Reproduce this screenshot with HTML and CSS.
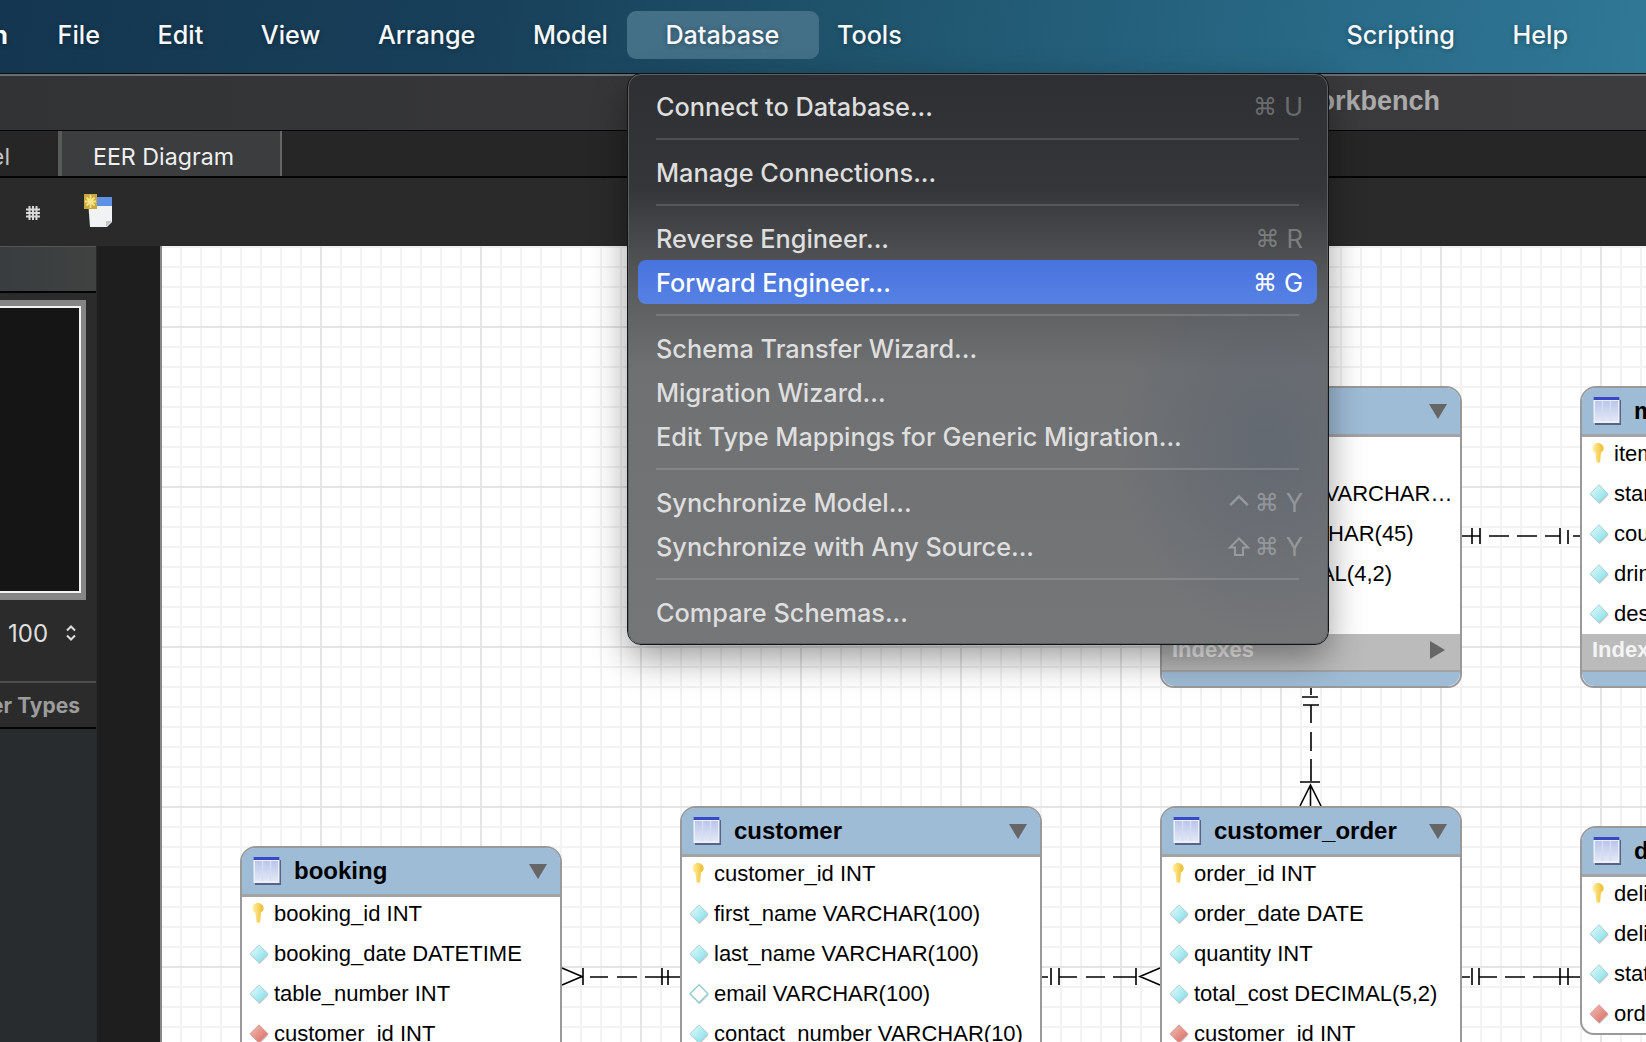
FILE: index.html
```html
<!DOCTYPE html>
<html lang="en">
<head>
  <meta charset="UTF-8">
  <title>MySQL Workbench</title>
  <link rel="stylesheet" href="styles.css">
</head>
<body>
  <!-- shared icons -->
  <svg class="sprite" width="0" height="0">
    <defs>
      <linearGradient id="gradCyan" x1="0" y1="0" x2="1" y2="1">
        <stop offset="0" stop-color="#eafdfd"/>
        <stop offset="1" stop-color="#79dbe6"/>
      </linearGradient>
      <linearGradient id="gradRed" x1="0" y1="0" x2="1" y2="1">
        <stop offset="0" stop-color="#f3c1ba"/>
        <stop offset="1" stop-color="#d8665c"/>
      </linearGradient>
      <linearGradient id="gradKey" x1="0" y1="0" x2="1" y2="0">
        <stop offset="0" stop-color="#fff3a8"/>
        <stop offset="1" stop-color="#eeb928"/>
      </linearGradient>
      <linearGradient id="gradCols" x1="0" y1="0" x2="0" y2="1">
        <stop offset="0" stop-color="#b9c6ea"/>
        <stop offset="1" stop-color="#e3e8f7"/>
      </linearGradient>
      <symbol id="icon-table" viewBox="0 0 28 28">
        <rect x="2" y="3" width="26" height="25" fill="#56648a"/>
        <rect x="0.5" y="0" width="26" height="26" fill="#eef0f8"/>
        <rect x="0.5" y="0" width="26" height="3" fill="#3a48c8"/>
        <rect x="2" y="4" width="23" height="20" fill="url(#gradCols)"/>
        <path d="M9.5 4v20M17.5 4v20" stroke="#d5dcf2" stroke-width="1.5"/>
      </symbol>
      <symbol id="icon-key" viewBox="0 0 14 20">
        <path d="M7 0c3.2 0 5.6 2.3 5.6 5.2 0 2-1 3.500-2.600 4.300l-.8 8.500c-.1 1-.7 1.700-1.600 1.700H6.500c-.6 0-1-.4-1.100-1.100L4.300 9.700C2.500 8.900 1.400 7.300 1.400 5.200 1.400 2.300 3.800 0 7 0z" fill="url(#gradKey)"/>
      </symbol>
      <symbol id="icon-col" viewBox="0 0 20 20">
        <path d="M10 1l9 9-9 9-9-9z" fill="#777" opacity=".35" transform="translate(0.6 1.2)"/>
        <path d="M10 .8l9 9-9 9-9-9z" fill="url(#gradCyan)" stroke="#a9cfd4"/>
      </symbol>
      <symbol id="icon-null" viewBox="0 0 20 20">
        <path d="M10 1l9 9-9 9-9-9z" fill="#777" opacity=".35" transform="translate(0.6 1.2)"/>
        <path d="M10 .8l9 9-9 9-9-9z" fill="#fff" stroke="#8fc9cf" stroke-width="1.300"/>
      </symbol>
      <symbol id="icon-fk" viewBox="0 0 20 20">
        <path d="M10 1l9 9-9 9-9-9z" fill="#777" opacity=".35" transform="translate(0.6 1.2)"/>
        <path d="M10 .8l9 9-9 9-9-9z" fill="url(#gradRed)" stroke="#cfa09a"/>
      </symbol>
      <symbol id="icon-ctrl" viewBox="0 0 20 20">
        <path d="M2 12l8-8 8 8" fill="none" stroke="currentColor" stroke-width="2.200"/>
      </symbol>
      <symbol id="icon-shift" viewBox="0 0 22 22">
        <path d="M11 2.500L20 11.500h-5v7.500H7v-7.500H2z" fill="none" stroke="currentColor" stroke-width="2"/>
      </symbol>
    </defs>
  </svg>

  <div class="app">
    <nav class="menubar">
      <span class="menubar-app"><b>MySQLWorkbench</b></span>
      <span class="menubar-item">File</span>
      <span class="menubar-item">Edit</span>
      <span class="menubar-item">View</span>
      <span class="menubar-item">Arrange</span>
      <span class="menubar-item">Model</span>
      <span class="menubar-item menubar-open">Database</span>
      <span class="menubar-item">Tools</span>
      <span class="menubar-item menubar-push">Scripting</span>
      <span class="menubar-item">Help</span>
    </nav>

    <div class="titlebar">MySQL Workbench</div>

    <div class="tabbar">
      <div class="tab tab-cut">Model</div>
      <div class="tab tab-active">EER Diagram</div>
    </div>

    <div class="toolbar">
      <svg class="tool-grid" width="16" height="16" viewBox="0 0 16 16">
        <path d="M4.500 1v14M8 1v14M11.500 1v14M1 4.500h14M1 8h14M1 11.500h14" stroke="#d8d8d8" stroke-width="2"/>
      </svg>
      <svg class="tool-note" width="32" height="34" viewBox="0 0 32 34">
        <path d="M5 6h24v22l-5 5H7z" fill="#f1f2f4"/>
        <path d="M29 27l-6 0 0 6z" fill="#c4c4c4"/>
        <rect x="5" y="3" width="24" height="9" fill="#5f91e4"/>
        <rect x="1" y="0" width="13" height="15" fill="#c9a93c"/>
        <path d="M7.500 1v13M2 7.500h11M3.500 3.500l8 8M11.500 3.500l-8 8" stroke="#f6e68a" stroke-width="1.800"/>
      </svg>
    </div>

    <div class="workspace">
      <aside class="sidepanel">
        <div class="side-head"></div>
        <div class="thumb"><div class="thumb-view"></div></div>
        <div class="zoom-row">
          <span>100</span>
          <svg width="12" height="18" viewBox="0 0 12 18">
            <path d="M2 6.500l4-4 4 4M2 11.500l4 4 4-4" fill="none" stroke="#dcdcdc" stroke-width="2"/>
          </svg>
        </div>
        <div class="side-title"><span>Layer Types</span></div>
        <div class="side-rest"></div>
      </aside>
      <div class="strip"></div>

      <main class="canvas">
        <!-- relationship lines, in page coordinates -->
        <svg class="links" width="1484" height="796" viewBox="162 246 1484 796">
          <g fill="none" stroke="#000" stroke-width="1.600">
            <path d="M562 968l20 8.500-20 8.500M583 968v17M590 977h18M617 977h20M645 977h35M662 968v17M668 970v15"/>
            <path d="M1041 977h7M1051 968v17M1059 968v17M1059 977h18M1086 977h19M1113 977h23M1136 968v17M1160 968l-20 8.500 20 8.500"/>
            <path d="M1462 977h8M1472 968v17M1479 968v17M1479 977h18M1505 977h20M1533 977h47M1560 968v17M1568 968v17"/>
            <path d="M1311 688v7M1302 697h16M1303 705h16M1311 705v18M1311 732v19M1311 759v22M1300 782h20M1300 806l10.500-21 10.500 21M1310.500 785v21"/>
            <path d="M1462 536h18M1472 528v16M1480 528v16M1489 536h20M1517 536h20M1545 536h15M1560 528v16M1568 530v14M1573 536h7"/>
          </g>
        </svg>

        <section class="tbl tbl-booking">
          <header class="tbl-head">
            <svg class="tbl-icon"><use href="#icon-table"/></svg>
            <h3>booking</h3>
            <i class="tri-down"></i>
          </header>
          <ul class="cols">
            <li><svg class="key"><use href="#icon-key"/></svg>booking_id INT</li>
            <li><svg class="dia"><use href="#icon-col"/></svg>booking_date DATETIME</li>
            <li><svg class="dia"><use href="#icon-col"/></svg>table_number INT</li>
            <li><svg class="dia"><use href="#icon-fk"/></svg>customer_id INT</li>
          </ul>
        </section>

        <section class="tbl tbl-customer">
          <header class="tbl-head">
            <svg class="tbl-icon"><use href="#icon-table"/></svg>
            <h3>customer</h3>
            <i class="tri-down"></i>
          </header>
          <ul class="cols">
            <li><svg class="key"><use href="#icon-key"/></svg>customer_id INT</li>
            <li><svg class="dia"><use href="#icon-col"/></svg>first_name VARCHAR(100)</li>
            <li><svg class="dia"><use href="#icon-col"/></svg>last_name VARCHAR(100)</li>
            <li><svg class="dia"><use href="#icon-null"/></svg>email VARCHAR(100)</li>
            <li><svg class="dia"><use href="#icon-col"/></svg>contact_number VARCHAR(10)</li>
          </ul>
        </section>

        <section class="tbl tbl-order">
          <header class="tbl-head">
            <svg class="tbl-icon"><use href="#icon-table"/></svg>
            <h3>customer_order</h3>
            <i class="tri-down"></i>
          </header>
          <ul class="cols">
            <li><svg class="key"><use href="#icon-key"/></svg>order_id INT</li>
            <li><svg class="dia"><use href="#icon-col"/></svg>order_date DATE</li>
            <li><svg class="dia"><use href="#icon-col"/></svg>quantity INT</li>
            <li><svg class="dia"><use href="#icon-col"/></svg>total_cost DECIMAL(5,2)</li>
            <li><svg class="dia"><use href="#icon-fk"/></svg>customer_id INT</li>
          </ul>
        </section>

        <section class="tbl tbl-staff">
          <header class="tbl-head">
            <svg class="tbl-icon"><use href="#icon-table"/></svg>
            <h3>staff</h3>
            <i class="tri-down"></i>
          </header>
          <ul class="cols">
            <li><svg class="key"><use href="#icon-key"/></svg>staff_id INT</li>
            <li><svg class="dia"><use href="#icon-col"/></svg>staff_contact VARCHAR…</li>
            <li><svg class="dia"><use href="#icon-col"/></svg>gender VARCHAR(45)</li>
            <li><svg class="dia"><use href="#icon-col"/></svg>rates DECIMAL(4,2)</li>
            <li></li>
          </ul>
          <div class="tbl-indexes">Indexes<i class="tri-right"></i></div>
          <div class="tbl-foot"></div>
        </section>

        <section class="tbl tbl-menu">
          <header class="tbl-head">
            <svg class="tbl-icon"><use href="#icon-table"/></svg>
            <h3>menu_item</h3>
            <i class="tri-down"></i>
          </header>
          <ul class="cols">
            <li><svg class="key"><use href="#icon-key"/></svg>item_id INT</li>
            <li><svg class="dia"><use href="#icon-col"/></svg>starter VARCHAR(45)</li>
            <li><svg class="dia"><use href="#icon-col"/></svg>course VARCHAR(45)</li>
            <li><svg class="dia"><use href="#icon-col"/></svg>drink VARCHAR(45)</li>
            <li><svg class="dia"><use href="#icon-col"/></svg>dessert VARCHAR(45)</li>
          </ul>
          <div class="tbl-indexes">Indexes<i class="tri-right"></i></div>
          <div class="tbl-foot"></div>
        </section>

        <section class="tbl tbl-delivery">
          <header class="tbl-head">
            <svg class="tbl-icon"><use href="#icon-table"/></svg>
            <h3>delivery</h3>
            <i class="tri-down"></i>
          </header>
          <ul class="cols">
            <li><svg class="key"><use href="#icon-key"/></svg>delivery_id INT</li>
            <li><svg class="dia"><use href="#icon-col"/></svg>delivery_date DATE</li>
            <li><svg class="dia"><use href="#icon-col"/></svg>status VARCHAR(45)</li>
            <li><svg class="dia"><use href="#icon-fk"/></svg>order_id INT</li>
          </ul>
        </section>
      </main>
    </div>

    <!-- the open Database menu -->
    <div class="dropdown">
      <div class="dd-item">Connect to Database...<span class="keys">⌘<b>U</b></span></div>
      <hr>
      <div class="dd-item">Manage Connections...</div>
      <hr>
      <div class="dd-item">Reverse Engineer...<span class="keys">⌘<b>R</b></span></div>
      <div class="dd-item dd-active">Forward Engineer...<span class="keys">⌘<b>G</b></span></div>
      <hr>
      <div class="dd-item">Schema Transfer Wizard...</div>
      <div class="dd-item">Migration Wizard...</div>
      <div class="dd-item">Edit Type Mappings for Generic Migration...</div>
      <hr>
      <div class="dd-item">Synchronize Model...<span class="keys"><svg class="mod"><use href="#icon-ctrl"/></svg>⌘<b>Y</b></span></div>
      <div class="dd-item">Synchronize with Any Source...<span class="keys"><svg class="mod"><use href="#icon-shift"/></svg>⌘<b>Y</b></span></div>
      <hr>
      <div class="dd-item">Compare Schemas...</div>
    </div>
  </div>
</body>
</html>
```

FILE: styles.css
```css
* {
  box-sizing: border-box;
}
html, body {
  margin: 0;
  padding: 0;
  height: 100%;
  overflow: hidden;
  background: #1e1e1e;
}
.sprite {
  position: absolute;
}
.app {
  position: relative;
  display: flex;
  flex-direction: column;
  width: 1646px;
  height: 1042px;
  overflow: hidden;
  font-family: Inter, "Noto Sans", sans-serif;
}

/* macOS menu bar */
.menubar {
  display: flex;
  align-items: center;
  gap: 19.6px;
  flex: none;
  height: 74px;
  padding: 0 59px 3px 0;
  border-bottom: 1px solid #0c0c0c;
  background: linear-gradient(100deg, #143650 0%, #18405a 30%, #20566f 55%, #2a6d8b 85%, #2f7896 100%);
  color: #f6f8f9;
  font-size: 25.2px;
  font-weight: 450;
  text-shadow: 0 1px 5px rgba(0, 0, 0, 0.35);
}
.menubar-app {
  display: flex;
  justify-content: flex-end;
  width: 8px;
  margin-right: 11px;
  white-space: nowrap;
}
.menubar-item {
  padding: 0 19px;
  line-height: 48px;
}
.menubar-open {
  padding: 0 40px 0 38px;
  margin: 0 -21px 0 -19px;
  border-radius: 9px;
  background: #436f87;
}
.menubar-push {
  margin-left: auto;
}

/* window chrome */
.titlebar {
  flex: none;
  height: 57px;
  padding: 10px 206px 0 0;
  border-top: 2px solid #6d6d6d;
  border-bottom: 1px solid #060606;
  background: linear-gradient(90deg, #323334, #3c3c3e);
  color: #aaa;
  font-family: "Liberation Sans", sans-serif;
  font-size: 27px;
  font-weight: bold;
  text-align: right;
}
.tabbar {
  display: flex;
  flex: none;
  height: 47px;
  border-bottom: 2px solid #050505;
  background: #262626;
  color: #f0f0f0;
  font-size: 23.2px;
}
.tab {
  display: flex;
  align-items: center;
  padding-top: 6px;
  white-space: nowrap;
}
.tab-cut {
  justify-content: flex-end;
  width: 62px;
  padding-right: 48px;
  border-right: 4px solid #5a5a58;
  color: #c4c4c4;
}
.tab-active {
  width: 220px;
  padding-left: 31px;
  border-right: 2px solid #666;
  background: #3b3d3f;
}
.toolbar {
  display: flex;
  align-items: center;
  flex: none;
  height: 68px;
  padding-left: 25px;
  background: #2a2a2a;
}
.tool-grid {
  margin-top: 2px;
}
.tool-note {
  margin-left: 42px;
  margin-top: -2px;
}

/* body of the window */
.workspace {
  display: flex;
  flex: 1;
  min-height: 0;
}
.sidepanel {
  display: flex;
  flex-direction: column;
  flex: none;
  width: 97px;
  background: #2b2b2b;
}
.side-head {
  flex: none;
  height: 47px;
  border-top: 1px solid #555;
  border-bottom: 2px solid #050505;
  background: linear-gradient(90deg, #3a3d40, #3f4240);
  margin-right: 1px;
}
.thumb {
  flex: none;
  width: 86px;
  height: 300px;
  margin-top: 7px;
  padding: 6px 5px 7px 0;
  background: #858585;
}
.thumb-view {
  height: 100%;
  border: solid #f2f2f2;
  border-width: 2px 2px 2px 0;
  background: #151515;
}
.zoom-row {
  display: flex;
  align-items: center;
  gap: 17px;
  flex: none;
  height: 66px;
  padding: 0 0 0 8px;
  color: #dfdfdf;
  font-size: 24px;
}
.side-title {
  display: flex;
  align-items: center;
  justify-content: flex-end;
  flex: none;
  height: 48px;
  margin-top: 15px;
  margin-right: 1px;
  padding-right: 16px;
  border-top: 2px solid #4e4e4e;
  border-bottom: 2px solid #050505;
  color: #9c9c9c;
  font-size: 21px;
  font-weight: 700;
  white-space: nowrap;
}
.side-rest {
  flex: 1;
  background: #282c2f;
}
.strip {
  flex: none;
  width: 65px;
  border-right: 2px solid #888;
  background: #1e1e1e;
}

/* diagram canvas: minor grid 20px, major grid 160px */
.canvas {
  position: relative;
  flex: 1;
  overflow: hidden;
  background-color: #fff;
  background-image:
    linear-gradient(to right, #e5e5e5 2px, transparent 2px),
    linear-gradient(to bottom, #e5e5e5 2px, transparent 2px),
    linear-gradient(to right, #f2f2f2 2px, transparent 2px),
    linear-gradient(to bottom, #f2f2f2 2px, transparent 2px);
  background-size: 160px 160px, 160px 160px, 20px 20px, 20px 20px;
  background-position: 158px 0, 0 80px, 18px 0, 0 0;
}
.links {
  position: absolute;
  left: 0;
  top: 0;
}

/* table nodes */
.tbl {
  position: absolute;
  border: 2px solid #999;
  border-radius: 16px 16px 14px 14px;
  background: #fff;
  color: #000;
  font-family: "Liberation Sans", sans-serif;
}
.tbl-booking { left: 78px; top: 600px; width: 322px; }
.tbl-customer { left: 518px; top: 560px; width: 362px; }
.tbl-order { left: 998px; top: 560px; width: 302px; }
.tbl-staff { left: 998px; top: 140px; width: 302px; }
.tbl-menu { left: 1418px; top: 140px; width: 302px; }
.tbl-delivery { left: 1418px; top: 580px; width: 302px; }
.tbl-head {
  display: flex;
  align-items: center;
  height: 49px;
  padding: 0 13px 0 11px;
  border-bottom: 3px solid #a3a3a3;
  border-radius: 13px 13px 0 0;
  background: #9fbcd6;
}
.tbl-head h3 {
  flex: 1;
  margin: 0 0 0 13px;
  font-size: 24px;
  font-weight: bold;
}
.tbl-icon {
  width: 28px;
  height: 28px;
}
.tri-down {
  width: 0;
  height: 0;
  border: solid transparent;
  border-width: 15px 9px 0;
  border-top-color: #666;
}
.cols {
  display: flex;
  flex-direction: column;
  gap: 4px;
  margin: 0;
  padding: 0;
  list-style: none;
}
.cols li {
  position: relative;
  height: 36px;
  padding: 0 8px 0 32px;
  overflow: hidden;
  font-size: 22px;
  line-height: 34px;
  white-space: nowrap;
}
.key {
  position: absolute;
  left: 9px;
  top: 6px;
  width: 14px;
  height: 20px;
}
.dia {
  position: absolute;
  left: 7px;
  top: 7px;
  width: 20px;
  height: 20px;
}
.tbl-indexes {
  display: flex;
  align-items: center;
  justify-content: space-between;
  height: 38px;
  margin-top: 1px;
  padding: 0 15px 4px 10px;
  border-bottom: 2px solid #a3a3a3;
  background: #bbb;
  color: #f4f4f4;
  font-size: 22px;
  font-weight: bold;
}
.tri-right {
  width: 0;
  height: 0;
  border: solid transparent;
  border-width: 9px 0 9px 15px;
  border-left-color: #666;
}
.tbl-foot {
  height: 14px;
  border-radius: 0 0 13px 13px;
  background: #9fbcd6;
}

/* dropdown menu */
.dropdown {
  position: absolute;
  left: 628px;
  top: 74px;
  width: 700px;
  height: 570px;
  padding: 9.5px 10px 0 9px;
  border: 1.5px solid #5f6062;
  border-radius: 13px;
  outline: 1px solid #141414;
  background:
    radial-gradient(ellipse 150px 190px at 640px 370px, rgba(88, 98, 112, 0.55), transparent),
    linear-gradient(to bottom, #2d2f32 0%, #343639 20%, #5a5c5e 38%, #6e7072 52%, #747678 100%);
  box-shadow: 0 14px 36px rgba(0, 0, 0, 0.4);
  color: #dedede;
  font-size: 25.3px;
  font-weight: 450;
}
.dd-item {
  display: flex;
  align-items: center;
  justify-content: space-between;
  height: 44px;
  padding: 0 14px 0 18px;
  border-radius: 8px;
  white-space: nowrap;
}
.dd-active {
  margin-top: -1px;
  padding-top: 2px;
  background: linear-gradient(to bottom, #4973de, #5681e3);
  color: #fff;
}
.keys {
  display: flex;
  align-items: center;
  font-family: "DejaVu Sans", sans-serif;
  font-size: 24px;
  color: rgba(255, 255, 255, 0.3);
}
.keys b {
  margin-left: 7px;
  font-family: Inter, sans-serif;
  font-size: 25.6px;
  font-weight: 400;
}
.mod {
  width: 22px;
  height: 22px;
  margin-right: 5px;
}
.dd-active .keys {
  color: #fff;
}
.dropdown hr {
  height: 2px;
  margin: 9px 18px 11px 18px;
  border: 0;
  background: rgba(255, 255, 255, 0.14);
}
.dropdown .dd-active + hr {
  margin-top: 10px;
}
```
